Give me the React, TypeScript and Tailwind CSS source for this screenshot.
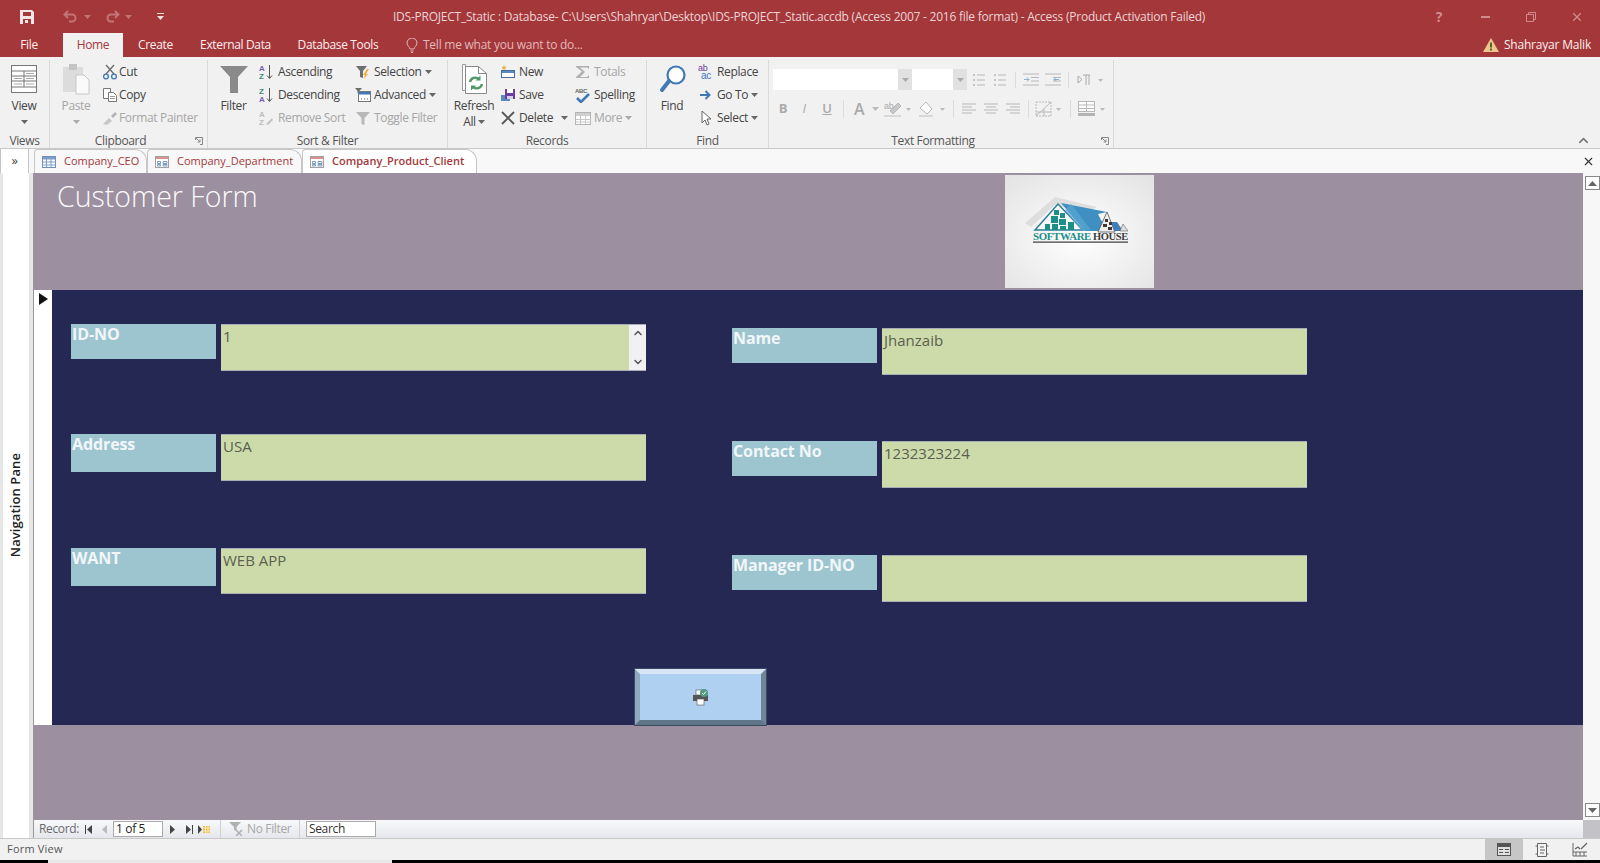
import { ReactNode } from 'react';
import { X, ChevronUp, ChevronDown } from 'lucide-react';

const Caret = ({ className = 'fill-[#666]' }: { className?: string }) => (
  <svg width="7" height="4" viewBox="0 0 7 4" className={`inline-block ${className}`}>
    <path d="M0 0h7L3.5 4z" />
  </svg>
);

const Ico = ({ w = 16, h = 16, children }: { w?: number; h?: number; children: ReactNode }) => (
  <svg width={w} height={h} viewBox={`0 0 ${w} ${h}`} className="shrink-0" fill="none">
    {children}
  </svg>
);

const RibbonRow = ({ icon, label, disabled, caret, tight }: { icon: ReactNode; label: string; disabled?: boolean; caret?: boolean; tight?: boolean }) => (
  <div className={`flex h-[23px] items-center whitespace-nowrap ${tight ? 'gap-[1px]' : 'gap-[3px]'} ${disabled ? 'text-[#a6a6a6]' : 'text-[#444]'}`}>
    {icon}
    <span>{label}</span>
    {caret && <Caret className={disabled ? 'fill-[#aaa]' : 'fill-[#666]'} />}
  </div>
);

const Group = ({ width, label, launcher, children }: { width: number; label: string; launcher?: boolean; children: ReactNode }) => (
  <div className="relative flex h-full shrink-0 flex-col border-r border-[#dadada]" style={{ width }}>
    <div className="flex h-[72px] shrink-0">{children}</div>
    <div className={`flex h-[18px] shrink-0 items-center justify-center text-[#555] ${launcher ? 'pr-[16px]' : ''}`}>{label}</div>
    {launcher && (
      <svg width="8" height="8" viewBox="0 0 8 8" className="absolute right-[4px] bottom-[3px]" fill="none" stroke="#888">
        <path d="M.5 3V.5H7.5V7.5H5M1 1l4 4M5 2.500V5H2.500" />
      </svg>
    )}
  </div>
);

const BigButton = ({ icon, label, second, width, disabled }: { icon: ReactNode; label: string; second?: ReactNode; width: number; disabled?: boolean }) => (
  <div className={`flex shrink-0 flex-col items-center ${disabled ? 'text-[#a6a6a6]' : 'text-[#444]'}`} style={{ width }}>
    <div className="flex h-[38px] items-center justify-center">{icon}</div>
    <div className="leading-[16px]">{label}</div>
    <div className="flex h-[16px] items-center gap-[2px] leading-[16px]">{second}</div>
  </div>
);

const LabeledField = ({
  label,
  value,
  labelHeight,
  top,
  inputHeight,
  scroll,
}: {
  label: string;
  value: string;
  labelHeight: number;
  top: number;
  inputHeight: number;
  scroll?: boolean;
}) => (
  <div className="flex items-start gap-[5px]" style={{ marginTop: top }}>
    <div
      className="w-[145px] bg-[#9cc5d0] pl-[1px] text-[16px] leading-[20px] font-bold tracking-[-0.1px] text-[#f2f6f8]"
      style={{ height: labelHeight }}
    >
      {label}
    </div>
    <div
      className="relative w-[425px] border-y border-[#a7adb5] bg-[#cddbab] pl-[2px] text-[15px] leading-[22px] tracking-normal text-[#5a5f4e]"
      style={{ height: inputHeight }}
    >
      {value}
      {scroll && (
        <div className="absolute top-0 right-0 flex h-full w-[17px] flex-col items-center justify-between bg-[#f1f1f4] py-[2px] text-[#555]">
          <ChevronUp size={12} strokeWidth={3} />
          <ChevronDown size={12} strokeWidth={3} />
        </div>
      )}
    </div>
  </div>
);

const DocTab = ({
  kind,
  label,
  active,
  width,
  pad,
}: {
  kind: 'table' | 'form';
  label: string;
  active?: boolean;
  width: number;
  pad: number;
}) => (
  <div
    className={`flex h-[24px] shrink-0 items-center gap-[7px] rounded-tl-[4px] rounded-tr-[12px] border border-b-0 border-[#c6c6c6] text-[11px] tracking-normal text-[#a4373a] ${active ? 'bg-white font-semibold' : 'bg-[#f8f8f8]'}`}
    style={{ width, paddingLeft: pad }}
  >
    {kind === 'table' ? (
      <Ico>
        <rect x="1.500" y="2.500" width="13" height="11" fill="#fff" stroke="#6d8fb8" />
        <path d="M1.500 5h13M1.500 8h13M1.500 11h13M5.500 3v10M10 3v10" stroke="#7f9fc8" />
        <rect x="2" y="3" width="12" height="2" fill="#7f9fc8" />
      </Ico>
    ) : (
      <Ico>
        <rect x="1.500" y="2.500" width="13" height="11" fill="#fff" stroke="#a0a0a0" />
        <rect x="2" y="3" width="12" height="2" fill="#c0392b" opacity=".55" />
        <path d="M3.500 7.500h3v2h-3zM3.500 10.500h3v1.500h-3zM9 7.500h4v2H9zM9 10.500h4V12H9z" stroke="#7b9bbf" />
      </Ico>
    )}
    <span className="whitespace-nowrap">{label}</span>
  </div>
);

const Logo = () => (
  <svg width="149" height="113" viewBox="0 0 149 113" className="block">
    <defs>
      <radialGradient id="logoBg" cx="50%" cy="55%" r="70%">
        <stop offset="0%" stopColor="#ffffff" />
        <stop offset="100%" stopColor="#e4e4e4" />
      </radialGradient>
    </defs>
    <rect width="149" height="113" fill="url(#logoBg)" />
    <path d="M20 48L50 22l42 10-10 6-32-8-24 22z" fill="#dedede" />
    <path d="M30 55L53 29l25 26z" fill="#f8f8f8" stroke="#2d7d98" strokeWidth="1.500" />
    <path d="M56 28l46 9-9 2 3 6 9 11H80z" fill="#3f8fc2" />
    <path d="M76 55l-16-20 6-6 20 26z" fill="#5aa6d0" opacity=".7" />
    <path d="M102 37l8 20H93z" fill="#efefef" stroke="#555" strokeWidth=".8" />
    <path d="M106 47h6l6 9h-9z" fill="#3f7fb5" />
    <path d="M118 49l5 7h-8z" fill="#ddd" stroke="#666" strokeWidth=".6" />
    <g fill="#1c8f88">
      <rect x="49" y="35" width="5" height="5" />
      <rect x="55" y="38" width="5" height="5" />
      <rect x="46" y="41" width="7" height="7" />
      <rect x="54" y="44" width="7" height="6" />
      <rect x="40" y="49" width="5" height="6" />
      <rect x="47" y="49" width="6" height="6" />
      <rect x="55" y="51" width="6" height="4" />
      <rect x="63" y="47" width="6" height="8" />
    </g>
    <g fill="#46342f">
      <rect x="100" y="44" width="3" height="3" />
      <rect x="104" y="47" width="3" height="3" />
      <rect x="98" y="49" width="4" height="3" />
      <rect x="103" y="52" width="4" height="3" />
    </g>
    <text x="28" y="65" fontFamily="'Liberation Serif', serif" fontWeight="700" fontSize="11" fill="#1c8f88" textLength="58" lengthAdjust="spacingAndGlyphs">SOFTWARE</text>
    <text x="88" y="65" fontFamily="'Liberation Serif', serif" fontWeight="700" fontSize="11" fill="#3a3a3a" textLength="35" lengthAdjust="spacingAndGlyphs">HOUSE</text>
    <rect x="28" y="66.500" width="95" height="1.200" fill="#3a3a3a" />
  </svg>
);

export default function App() {
  return (
    <div className="flex h-[863px] w-[1600px] flex-col overflow-hidden bg-black font-['Open_Sans','Noto_Sans',sans-serif] text-[12px] tracking-[-0.35px]">
      {/* title bar */}
      <div className="relative h-[57px] shrink-0 bg-[#a4373a] text-white">
        <div className="flex h-[33px] items-center">
          <svg width="16" height="16" viewBox="0 0 16 16" fill="#f5e6e6" className="ml-[19px]">
            <path fillRule="evenodd" d="M1 1h12l2 2v12H1zM4 3v4h8V3zM4 10v5h8v-5z" />
            <rect x="6" y="11" width="3" height="3" />
          </svg>
          <div className="ml-[28px] flex items-center opacity-40">
            <svg width="16" height="14" viewBox="0 0 16 14" fill="none" stroke="#f0d0d0" strokeWidth="2">
              <path d="M5 1L1.500 4.500 5 8M2 4.500h7a3.500 3.500 0 010 7H6" />
            </svg>
            <Caret className="ml-[5px] fill-[#f0d0d0]" />
            <svg width="16" height="14" viewBox="0 0 16 14" fill="none" stroke="#f0d0d0" strokeWidth="2" className="ml-[13px]">
              <path d="M11 1l3.500 3.500L11 8M14 4.500H7a3.500 3.500 0 000 7h3" />
            </svg>
            <Caret className="ml-[5px] fill-[#f0d0d0]" />
          </div>
          <svg width="8" height="8" viewBox="0 0 8 8" className="ml-[25px]" fill="#f5dede">
            <rect y="0" width="7" height="1" />
            <path d="M0 3h7L3.500 7z" />
          </svg>
          <div className="ml-[228px] whitespace-nowrap text-[12px] tracking-[-0.235px] text-[#ecd3d4]">
            IDS-PROJECT_Static : Database- C:\Users\Shahryar\Desktop\IDS-PROJECT_Static.accdb (Access 2007 - 2016 file format) - Access (Product Activation Failed)
          </div>
          <div className="ml-auto flex items-center text-[#d08d8f]">
            <span className="w-[46px] text-center text-[14px] font-bold">?</span>
            <span className="flex w-[46px] justify-center">
              <span className="h-[2px] w-[9px] bg-[#cf8a8c]" />
            </span>
            <span className="flex w-[46px] justify-center">
              <svg width="10" height="10" viewBox="0 0 10 10" fill="none" stroke="#cf8a8c">
                <path d="M.5 2.500h7v7h-7zM2.500 2V.5h7v7H8" />
              </svg>
            </span>
            <span className="flex w-[46px] justify-center">
              <X size={14} strokeWidth={2} />
            </span>
          </div>
        </div>
        <div className="flex h-[24px] items-end">
          <div className="flex h-[24px] w-[58px] items-center justify-center text-[#fbeeee]">File</div>
          <div className="ml-[5px] flex h-[24px] w-[60px] items-center justify-center bg-[#f1f1f1] text-[#a4373a]">Home</div>
          <div className="flex h-[24px] w-[65px] items-center justify-center text-[#fbeeee]">Create</div>
          <div className="flex h-[24px] w-[95px] items-center justify-center text-[#fbeeee]">External Data</div>
          <div className="flex h-[24px] w-[110px] items-center justify-center text-[#fbeeee]">Database Tools</div>
          <div className="ml-[13px] flex h-[24px] items-center gap-[5px] text-[#e1b9ba]">
            <svg width="12" height="15" viewBox="0 0 12 15" fill="none" stroke="#e1b9ba">
              <path d="M4 11c0-2-3-3-3-6a5 5 0 0110 0c0 3-3 4-3 6zM4.500 13h3M5 14.500h2" />
            </svg>
            <span className="tracking-[-0.25px]">Tell me what you want to do...</span>
          </div>
          <div className="ml-auto mr-[9px] flex h-[24px] items-center gap-[5px] tracking-[-0.2px] text-[#fbeeee]">
            <svg width="16" height="14" viewBox="0 0 16 14">
              <path d="M8 0l8 14H0z" fill="#f0c48c" />
              <rect x="7" y="4.500" width="2" height="5" fill="#4f6b2a" />
              <rect x="7" y="10.500" width="2" height="2" fill="#4f6b2a" />
            </svg>
            <span>Shahrayar Malik</span>
          </div>
        </div>
      </div>

      {/* ribbon */}
      <div className="relative flex h-[92px] shrink-0 border-b border-[#c8c8c8] bg-[#f1f1f1] pt-[3px]">
        <Group width={50} label="Views">
          <BigButton
            width={48}
            label="View"
            second={<Caret />}
            icon={
              <svg width="26" height="28" viewBox="0 0 26 28" fill="none" stroke="#777">
                <rect x=".5" y=".5" width="25" height="27" fill="#fff" />
                <path d="M.5 6h25M.5 11h25M.5 16h25M.5 22h25M13 6v16" />
                <path d="M15 8.500h8M3 13.500h8M15 13.500h8M3 19h8M15 19h8" stroke="#aaa" />
              </svg>
            }
          />
        </Group>
        <Group width={158} label="Clipboard" launcher>
          <BigButton
            width={52}
            disabled
            label="Paste"
            second={<Caret className="fill-[#aaa]" />}
            icon={
              <svg width="28" height="32" viewBox="0 0 28 32">
                <rect x="1" y="4" width="20" height="25" fill="#dcdcdc" />
                <rect x="7" y="1" width="8" height="6" fill="#c4c4c4" />
                <path d="M14 12h8l5 5v14H14z" fill="#fafafa" stroke="#c8c8c8" />
              </svg>
            }
          />
          <div className="flex flex-col">
            <RibbonRow
              tight
              label="Cut"
              icon={
                <Ico>
                  <path d="M4 1l8 9M12 1L4 10" stroke="#6b6b6b" strokeWidth="1.300" />
                  <circle cx="4" cy="12.500" r="2.400" stroke="#3f78b5" strokeWidth="1.300" />
                  <circle cx="12" cy="12.500" r="2.400" stroke="#3f78b5" strokeWidth="1.300" />
                </Ico>
              }
            />
            <RibbonRow
              tight
              label="Copy"
              icon={
                <Ico>
                  <path d="M1.500 1.500h7v10h-7z" fill="#fff" stroke="#777" />
                  <path d="M6.500 5.500h5l3 3v6h-8z" fill="#fff" stroke="#777" />
                  <path d="M8 9.500h5M8 11.500h5" stroke="#999" />
                </Ico>
              }
            />
            <RibbonRow
              tight
              disabled
              label="Format Painter"
              icon={
                <Ico>
                  <path d="M1 14l6-6 3 3-5 4z" fill="#c8c8c8" />
                  <path d="M9 6l4-4 2 2-4 4z" fill="#b4b4b4" />
                </Ico>
              }
            />
          </div>
        </Group>
        <Group width={240} label="Sort & Filter">
          <BigButton
            width={51}
            label="Filter"
            icon={
              <svg width="28" height="28" viewBox="0 0 28 28">
                <path d="M0 1h28L18 12v16h-8V12z" fill="#8a8a8a" />
              </svg>
            }
          />
          <div className="flex w-[96px] flex-col">
            <RibbonRow
              label="Ascending"
              icon={
                <Ico>
                  <text x="0" y="7" fontSize="8" fontWeight="700" fill="#7a5fb0" fontFamily="'Liberation Sans', sans-serif">A</text>
                  <text x="0" y="15" fontSize="8" fontWeight="700" fill="#3f8a78" fontFamily="'Liberation Sans', sans-serif">Z</text>
                  <path d="M10.500 1v13M8 11.500l2.500 3 2.500-3" stroke="#555" />
                </Ico>
              }
            />
            <RibbonRow
              label="Descending"
              icon={
                <Ico>
                  <text x="0" y="7" fontSize="8" fontWeight="700" fill="#3f8a78" fontFamily="'Liberation Sans', sans-serif">Z</text>
                  <text x="0" y="15" fontSize="8" fontWeight="700" fill="#7a5fb0" fontFamily="'Liberation Sans', sans-serif">A</text>
                  <path d="M10.500 1v13M8 11.500l2.500 3 2.500-3" stroke="#555" />
                </Ico>
              }
            />
            <RibbonRow
              disabled
              label="Remove Sort"
              icon={
                <Ico>
                  <text x="0" y="7" fontSize="8" fontWeight="700" fill="#bbb" fontFamily="'Liberation Sans', sans-serif">A</text>
                  <text x="0" y="15" fontSize="8" fontWeight="700" fill="#bbb" fontFamily="'Liberation Sans', sans-serif">Z</text>
                  <path d="M7 14l6-6 1 2-5 5z" fill="#c4c4c4" />
                </Ico>
              }
            />
          </div>
          <div className="flex flex-col">
            <RibbonRow
              label="Selection"
              caret
              icon={
                <Ico>
                  <path d="M1 2h11L8 7v7l-3-1V7z" fill="#6f6f6f" />
                  <path d="M12 5l2 0-3 5h2l-4 5 1-4H8z" fill="#f0b040" />
                </Ico>
              }
            />
            <RibbonRow
              label="Advanced"
              caret
              icon={
                <Ico>
                  <path d="M0 1h7L4.500 4v3L2.500 6V4z" fill="#6f6f6f" />
                  <rect x="3.500" y="4.500" width="12" height="10" fill="#fff" stroke="#777" />
                  <rect x="4" y="5" width="11" height="2.500" fill="#3f78b5" />
                  <path d="M6 12h1M9 12h1M12 12h1" stroke="#555" />
                </Ico>
              }
            />
            <RibbonRow
              disabled
              label="Toggle Filter"
              icon={
                <Ico>
                  <path d="M1 2h14L9.500 8v7l-3-1V8z" fill="#b8b8b8" />
                </Ico>
              }
            />
          </div>
        </Group>
        <Group width={199} label="Records">
          <BigButton
            width={52}
            label="Refresh"
            second={
              <>
                <span>All</span>
                <Caret />
              </>
            }
            icon={
              <svg width="25" height="30" viewBox="0 0 25 30" fill="none">
                <path d="M.5 .5h3v26h-3z" fill="#fff" stroke="#999" />
                <path d="M3.500 2.500h13l8 7v20h-21z" fill="#fff" stroke="#888" />
                <path d="M16.500 2.500v7h8" stroke="#888" />
                <path d="M8 18a5.500 5.500 0 019-3M20 20a5.500 5.500 0 01-9 3" stroke="#4f9a64" strokeWidth="2.400" />
                <path d="M18.500 11.500v5h-5zM9 26.500v-5h5z" fill="#4f9a64" />
              </svg>
            }
          />
          <div className="flex w-[75px] flex-col">
            <RibbonRow
              label="New"
              icon={
                <Ico>
                  <rect x="1.500" y="6.500" width="13" height="7" fill="#fff" stroke="#456f9e" />
                  <rect x="2" y="7" width="12" height="2" fill="#5a8ac0" />
                  <path d="M4 1l.8 1.700L6.500 3l-1.200 1.200.3 1.800L4 5.200 2.400 6l.3-1.800L1.500 3l1.700-.3z" fill="#e8b440" />
                </Ico>
              }
            />
            <RibbonRow
              label="Save"
              icon={
                <Ico>
                  <rect x="1" y="8" width="9" height="6" fill="#5a8ac0" />
                  <rect x="5" y="2" width="10" height="10" fill="#6a3fa0" />
                  <rect x="7" y="2" width="6" height="4" fill="#fff" />
                  <rect x="7" y="9" width="6" height="3" fill="#d8d0ea" />
                </Ico>
              }
            />
            <div className="flex h-[23px] items-center gap-[3px] whitespace-nowrap text-[#444]">
              <Ico>
                <path d="M2 2l12 12M14 2L2 14" stroke="#555" strokeWidth="1.800" />
              </Ico>
              <span>Delete</span>
              <span className="ml-[5px]">
                <Caret />
              </span>
            </div>
          </div>
          <div className="flex flex-col">
            <RibbonRow
              disabled
              label="Totals"
              icon={
                <Ico>
                  <path d="M1 2h13v3l-2-1.500H5l5 4.500-5 5h7l2-2v3H1v-1l6-5.500L1 3z" fill="#b0b0b0" />
                </Ico>
              }
            />
            <RibbonRow
              label="Spelling"
              icon={
                <Ico>
                  <text x="0" y="6" fontSize="6" fontWeight="700" fill="#666" fontFamily="'Liberation Sans', sans-serif">ABC</text>
                  <path d="M2 11l4 4 8-8" stroke="#3f78b5" strokeWidth="2.600" />
                </Ico>
              }
            />
            <RibbonRow
              disabled
              label="More"
              caret
              icon={
                <Ico>
                  <rect x=".5" y="2.500" width="15" height="12" fill="#fff" stroke="#b4b4b4" />
                  <rect x="1" y="3" width="14" height="3" fill="#cfcfcf" />
                  <path d="M.5 9.500h15M.5 12h15M5.500 6v8M10.500 6v8" stroke="#c8c8c8" />
                </Ico>
              }
            />
          </div>
        </Group>
        <Group width={122} label="Find">
          <BigButton
            width={50}
            label="Find"
            icon={
              <svg width="27" height="28" viewBox="0 0 27 28" fill="none">
                <circle cx="17" cy="10" r="8.500" stroke="#3f78b5" strokeWidth="2.200" fill="#fff" />
                <path d="M10 16L3 25" stroke="#3f78b5" strokeWidth="4" strokeLinecap="round" />
              </svg>
            }
          />
          <div className="flex flex-col">
            <RibbonRow
              label="Replace"
              icon={
                <Ico w={17}>
                  <text x="1" y="7" fontSize="9" fill="#6a3fa0" fontFamily="'Liberation Sans', sans-serif">ab</text>
                  <text x="4" y="15" fontSize="10" fill="#3f78b5" fontFamily="'Liberation Sans', sans-serif">ac</text>
                </Ico>
              }
            />
            <RibbonRow
              label="Go To"
              caret
              icon={
                <Ico w={17}>
                  <path d="M3 8h9M8.500 4l4 4-4 4" stroke="#3f78b5" strokeWidth="2" />
                </Ico>
              }
            />
            <RibbonRow
              label="Select"
              caret
              icon={
                <Ico w={17}>
                  <path d="M5 1v12l3-3 2 5 2-1-2-5h4z" fill="#fff" stroke="#666" />
                </Ico>
              }
            />
          </div>
        </Group>
        <Group width={345} label="Text Formatting" launcher>
          <div className="ml-[4px] flex flex-col">
            <div className="mt-[9px] flex h-[21px] items-center">
              <div className="h-[21px] w-[125px] bg-white" />
              <div className="flex h-[21px] w-[14px] items-center justify-center bg-[#e1e1e1]">
                <Caret className="fill-[#aaa]" />
              </div>
              <div className="h-[21px] w-[41px] bg-white" />
              <div className="flex h-[21px] w-[14px] items-center justify-center bg-[#e1e1e1]">
                <Caret className="fill-[#aaa]" />
              </div>
              <svg width="135" height="18" viewBox="0 0 135 18" fill="none" stroke="#b8b8b8" className="ml-[5px]">
                <path d="M5 4h8M5 9h8M5 14h8M26 4h8M26 9h8M26 14h8" />
                <path d="M1 4h2M1 9h2M1 14h2M22 4h2M22 9h2M22 14h2" stroke="#999" />
                <path d="M43.500 1v16M96.500 1v16" stroke="#dcdcdc" />
                <path d="M51 3h16M59 6.500h8M59 10h8M51 14h16M73 3h16M81 6.500h8M81 10h8M73 14h16" />
                <path d="M52 8.500h5M55 6.500l2 2-2 2M87 8.500h-5M84 6.500l-2 2 2 2" stroke="#8bb0d8" />
                <path d="M106 5l4 3.500-4 3.500zM114 4v10M117 4v10M111 4h7" stroke="#aaa" />
                <path d="M126 8h5l-2.500 3z" fill="#bbb" stroke="none" />
              </svg>
            </div>
            <div className="mt-[8px] flex h-[22px] items-center text-[#aaa]">
              <span className="w-[20px] text-center text-[13px] font-bold">B</span>
              <span className="w-[22px] text-center text-[13px] italic">I</span>
              <span className="w-[24px] text-center text-[13px] font-semibold underline">U</span>
              <span className="ml-[4px] h-[18px] w-px bg-[#dcdcdc]" />
              <span className="ml-[5px] w-[20px] text-center text-[16px] font-semibold">A</span>
              <Caret className="ml-[3px] fill-[#bbb]" />
              <svg width="230" height="18" viewBox="0 0 230 18" fill="none" stroke="#b8b8b8">
                <path d="M11 11l8-8 3 3-8 8z" fill="#c8c8c8" />
                <text x="5" y="9" fontSize="9" fill="#aaa" stroke="none" fontFamily="'Liberation Sans', sans-serif">ab</text>
                <rect x="5" y="15" width="17" height="2" fill="#d8d8d8" stroke="none" />
                <path d="M27 8h5l-2.500 3z" fill="#bbb" stroke="none" />
                <path d="M41 8l6-6 6 7-5 5z" fill="#fff" />
                <rect x="40" y="15" width="14" height="2" fill="#d8d8d8" stroke="none" />
                <path d="M61 8h5l-2.500 3z" fill="#bbb" stroke="none" />
                <path d="M74.500 0v18M149.500 0v18M191.500 0v18" stroke="#dcdcdc" />
                <path d="M83 4h14M83 7h10M83 10h14M83 13h10M105 4h14M107 7h10M105 10h14M107 13h10M127 4h14M131 7h10M127 10h14M131 13h10" />
                <path d="M157 2h15v14h-15z" strokeDasharray="2 1" />
                <path d="M157 16L172 2M165 9v7M157 12h15" />
                <path d="M177 8h5l-2.500 3z" fill="#bbb" stroke="none" />
                <rect x="199.500" y="1.500" width="16" height="10" fill="#fff" />
                <path d="M199 5h16M199 8.500h16M207.500 2v10" />
                <rect x="199" y="13" width="17" height="3" fill="#b4b4b4" stroke="none" />
                <path d="M221 8h5l-2.500 3z" fill="#bbb" stroke="none" />
              </svg>
            </div>
          </div>
        </Group>
        <div className="absolute right-[9px] bottom-[0px] text-[#777]">
          <ChevronUp size={15} strokeWidth={2.500} />
        </div>
      </div>

      {/* document tabs */}
      <div className="flex h-[24px] shrink-0 bg-[#f8f8f8]">
        <div className="flex h-[24px] w-[29px] shrink-0 items-center justify-center border-x border-[#c6c6c6] bg-white text-[13px] text-[#444]">»</div>
        <div className="ml-[5px] flex">
          <DocTab kind="table" label="Company_CEO" width={113} pad={6} />
          <DocTab kind="form" label="Company_Department" width={155} pad={6} />
          <DocTab kind="form" label="Company_Product_Client" width={175} pad={6} active />
        </div>
        <div className="ml-auto flex w-[24px] items-center justify-center text-[#333]">
          <X size={13} strokeWidth={2} />
        </div>
      </div>

      {/* work area */}
      <div className="flex h-[665px] shrink-0">
        <div className="flex w-[34px] shrink-0 border-r border-[#999] bg-[#e6e6e6] pl-[3px]">
          <div className="flex w-[26px] items-center justify-center bg-white">
            <span className="rotate-180 text-[13px] font-semibold tracking-[0.1px] text-[#222] [writing-mode:vertical-rl]">Navigation Pane</span>
          </div>
        </div>
        <div className="flex min-w-0 flex-1 flex-col">
          <div className="flex flex-1">
            <div className="flex min-w-0 flex-1 flex-col bg-[#9c8fa0]">
              {/* form header */}
              <div className="flex h-[117px] shrink-0">
                <div className="w-[971px] pt-[2px] pl-[23px] text-[28.5px] font-light tracking-normal text-[#fafafa]">Customer Form</div>
                <div className="mt-[2px]">
                  <Logo />
                </div>
              </div>
              {/* detail */}
              <div className="flex h-[435px] shrink-0 bg-[#242852]">
                <div className="w-[18px] shrink-0 bg-white pt-[3px] pl-[5px]">
                  <svg width="9" height="12" viewBox="0 0 9 12">
                    <path d="M0 0l9 6-9 6z" fill="#111" />
                  </svg>
                </div>
                <div className="flex-1">
                  <div className="flex">
                    <div className="ml-[19px] w-[661px]">
                      <LabeledField label="ID-NO" value="1" top={34} labelHeight={35} inputHeight={47} scroll />
                      <LabeledField label="Address" value="USA" top={63} labelHeight={38} inputHeight={47} />
                      <LabeledField label="WANT" value="WEB APP" top={67} labelHeight={38} inputHeight={46} />
                    </div>
                    <div>
                      <LabeledField label="Name" value="Jhanzaib" top={38} labelHeight={35} inputHeight={47} />
                      <LabeledField label="Contact No" value="1232323224" top={66} labelHeight={35} inputHeight={47} />
                      <LabeledField label="Manager ID-NO" value="" top={67} labelHeight={35} inputHeight={47} />
                    </div>
                  </div>
                  <div className="ml-[583px] mt-[67px] flex h-[56px] w-[131px] items-center justify-center border-[5px] border-t-[#d6e6f5] border-r-[#6f8596] border-b-[#5f7688] border-l-[#8fa9c2] bg-[#b0d0f2] shadow-[0_0_0_1px_#3d4a63]">
                    <svg width="18" height="18" viewBox="0 0 18 18">
                      <rect x="1" y="7" width="15" height="6" fill="#555" />
                      <rect x="4" y="2" width="8" height="5" fill="#fff" stroke="#555" strokeWidth=".6" />
                      <rect x="5" y="11" width="7" height="6" fill="#fff" stroke="#555" strokeWidth=".6" />
                      <circle cx="12" cy="5" r="4" fill="#4f9a80" />
                      <path d="M10 5l1.500 1.500 2.500-3" stroke="#fff" fill="none" />
                    </svg>
                  </div>
                </div>
              </div>
            </div>
            {/* form scrollbar */}
            <div className="flex w-[17px] shrink-0 flex-col items-end bg-[#f7f7f7] pt-[3px] pb-[3px]">
              <div className="flex h-[14px] w-[15px] items-center justify-center border border-[#888] bg-white">
                <svg width="9" height="5" viewBox="0 0 9 5"><path d="M0 5l4.500-5L9 5z" fill="#666" /></svg>
              </div>
              <div className="flex-1" />
              <div className="flex h-[14px] w-[15px] items-center justify-center border border-[#888] bg-white">
                <svg width="9" height="5" viewBox="0 0 9 5"><path d="M0 0l4.500 5L9 0z" fill="#666" /></svg>
              </div>
            </div>
          </div>
          {/* record navigator */}
          <div className="flex h-[18px] shrink-0 items-center bg-gradient-to-b from-[#f8f9fb] to-[#e6e7ec] text-[#6b6b6b]">
            <span className="ml-[5px] w-[38px] whitespace-nowrap">Record:</span>
            <svg width="10" height="9" viewBox="0 0 10 9" className="ml-[7px]"><path d="M1 0h1v9H1zM8 0v9L3 4.500z" fill="#444" /></svg>
            <svg width="6" height="9" viewBox="0 0 6 9" className="ml-[8px]"><path d="M5 0v9L0 4.500z" fill="#bbb" /></svg>
            <div className="ml-[5px] flex h-[16px] w-[50px] items-center border border-[#aaa] bg-white pl-[2px] text-[#222]">1 of 5</div>
            <svg width="6" height="9" viewBox="0 0 6 9" className="ml-[7px]"><path d="M0 0v9l5-4.500z" fill="#444" /></svg>
            <svg width="10" height="9" viewBox="0 0 10 9" className="ml-[9px]"><path d="M1 0v9l5-4.500zM7 0h1v9H7z" fill="#444" /></svg>
            <svg width="13" height="9" viewBox="0 0 13 9" className="ml-[3px]">
              <path d="M0 0v9l4-4.500z" fill="#444" />
              <rect x="5" y="1" width="7" height="7" fill="#e9c04a" />
              <path d="M5 3h7M5 6h7M7.500 1v7M10 1v7" stroke="#fff" strokeWidth=".6" />
            </svg>
            <div className="ml-[9px] flex h-[18px] w-[80px] items-center gap-[2px] border-x border-[#d0d0d0] pl-[8px] whitespace-nowrap text-[#a6a6a6]">
              <svg width="16" height="14" viewBox="0 0 16 14" className="shrink-0">
                <path d="M0 0h12L7.500 5v4L5 8V5z" fill="#b0b0b0" />
                <path d="M7 8l6 6M13 8l-6 6" stroke="#b0b0b0" strokeWidth="1.500" />
              </svg>
              <span>No Filter</span>
            </div>
            <div className="ml-[6px] flex h-[16px] w-[70px] items-center border border-[#aaa] bg-white pl-[2px] text-[#333]">Search</div>
            <div className="ml-auto h-[18px] w-[17px] shrink-0 bg-[#c3c3c7]" />
          </div>
        </div>
      </div>

      {/* status bar */}
      <div className="flex h-[22px] shrink-0 items-center border-t border-[#c8c8c8] bg-[#f1f1f1] text-[#555]">
        <span className="ml-[7px] text-[11px] tracking-[0.2px]">Form View</span>
        <div className="mr-[2px] ml-auto flex h-full items-center">
          <div className="flex h-full w-[38px] items-center justify-center bg-[#c6c6c6]">
            <svg width="14" height="13" viewBox="0 0 14 13">
              <rect width="14" height="13" fill="#555" />
              <rect x="1" y="4" width="12" height="8" fill="#e0e0e0" />
              <path d="M2 6.500h4M8 6.500h4M2 9.500h4M8 9.500h4" stroke="#555" strokeWidth="1.200" />
            </svg>
          </div>
          <div className="flex h-full w-[38px] items-center justify-center">
            <svg width="14" height="14" viewBox="0 0 14 14" fill="none" stroke="#666">
              <path d="M2.500 .5h9v13h-9zM.5 3h2M.5 11h2M11.500 3h2M11.500 11h2M5 4h4M5 7h5M5 10h4" />
            </svg>
          </div>
          <div className="flex h-full w-[37px] items-center justify-center">
            <svg width="16" height="15" viewBox="0 0 16 15" fill="none" stroke="#666">
              <path d="M1 1v13h14M1 10h14M4 10v4M8 10v4M12 10v4" />
              <path d="M3 7l3-2 2 2M9 7l6-6" strokeWidth="1.300" />
            </svg>
          </div>
        </div>
      </div>
      <div className="flex h-[3px] shrink-0">
        <div className="ml-[48px] w-[344px] bg-[#e9e9e9]" />
      </div>
    </div>
  );
}
